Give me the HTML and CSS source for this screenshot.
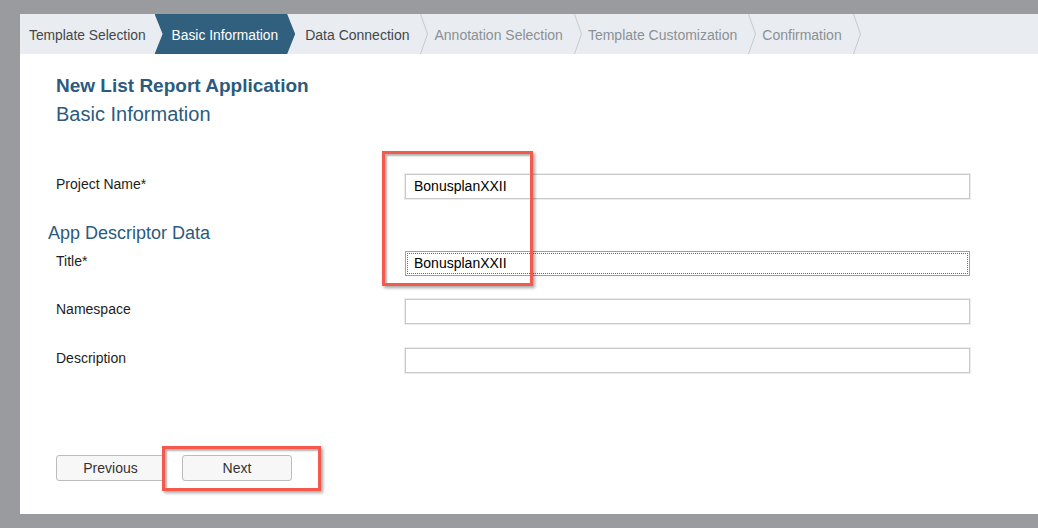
FILE: index.html
```html
<!DOCTYPE html>
<html lang="en">
<head>
<meta charset="utf-8">
<title>New List Report Application</title>
<link rel="stylesheet" href="styles.css">
</head>
<body>
<div class="panel">
  <nav class="steps">
    <span class="step done first">Template Selection</span>
    <span class="step active">Basic Information</span>
    <span class="step done">Data Connection</span>
    <svg class="sep" width="8" height="40" viewBox="0 0 8 40"><polyline points="0.5,0 7.5,20 0.5,40" fill="none" stroke="#c6cacf" stroke-width="1"/></svg>
    <span class="step todo">Annotation Selection</span>
    <svg class="sep" width="8" height="40" viewBox="0 0 8 40"><polyline points="0.5,0 7.5,20 0.5,40" fill="none" stroke="#c6cacf" stroke-width="1"/></svg>
    <span class="step todo">Template Customization</span>
    <svg class="sep" width="8" height="40" viewBox="0 0 8 40"><polyline points="0.5,0 7.5,20 0.5,40" fill="none" stroke="#c6cacf" stroke-width="1"/></svg>
    <span class="step todo">Confirmation</span>
    <svg class="sep" width="8" height="40" viewBox="0 0 8 40"><polyline points="0.5,0 7.5,20 0.5,40" fill="none" stroke="#c6cacf" stroke-width="1"/></svg>
  </nav>

  <div class="content">
    <h1 class="title">New List Report Application</h1>
    <h2 class="subtitle">Basic Information</h2>

    <div class="row row-first">
      <label class="label">Project Name*</label>
      <div class="input">BonusplanXXII</div>
    </div>

    <h3 class="section">App Descriptor Data</h3>

    <div class="row row-title">
      <label class="label">Title*</label>
      <div class="input focused">BonusplanXXII</div>
    </div>
    <div class="row row-ns">
      <label class="label">Namespace</label>
      <div class="input"></div>
    </div>
    <div class="row row-desc">
      <label class="label">Description</label>
      <div class="input"></div>
    </div>

    <div class="buttons">
      <button class="btn">Previous</button>
      <button class="btn btn-next">Next</button>
    </div>
  </div>

  <div class="highlight hl-inputs"></div>
  <div class="highlight hl-next"></div>
</div>
</body>
</html>
```

FILE: styles.css
```css
html, body {
  margin: 0;
  padding: 0;
}
body {
  background: #9a9b9f;
  width: 1038px;
  height: 528px;
  overflow: hidden;
  font-family: "Liberation Sans", Arial, sans-serif;
}
.panel {
  position: relative;
  margin: 14px 0 0 20px;
  width: 1018px;
  height: 500px;
  background: #ffffff;
}

/* breadcrumb */
.steps {
  display: flex;
  align-items: center;
  height: 40px;
  background: #e9edf1;
  font-size: 14px;
  white-space: nowrap;
}
.step {
  box-sizing: border-box;
  display: flex;
  align-items: center;
  height: 40px;
  padding-top: 2px;
}
.step.first {
  font-size: 13.8px;
  padding: 2px 9px 0 9px;
}
.step.done {
  color: #43474a;
}
.step.done:not(.first) {
  padding: 2px 11px 0 10px;
}
.step.active {
  color: #ffffff;
  background: #31607f;
  font-size: 13.8px;
  padding: 2px 17px 0 17px;
  clip-path: polygon(0 0, calc(100% - 8px) 0, 100% 50%, calc(100% - 8px) 100%, 0 100%, 8px 50%);
}
.step.todo {
  color: #8b9095;
  padding: 2px 11px 0 6px;
}
.sep {
  display: block;
  flex: none;
}

/* content */
.content {
  padding: 0 36px;
}
.title {
  margin: 20px 0 0;
  font-size: 19px;
  line-height: 24px;
  font-weight: bold;
  color: #2b5b7e;
}
.subtitle {
  margin: 3px 0 0;
  font-size: 20px;
  line-height: 26px;
  font-weight: normal;
  color: #2b5b7e;
}
.section {
  margin: 22px 0 0 -8px;
  font-size: 18px;
  line-height: 24px;
  font-weight: normal;
  color: #2b5b7e;
}
.row {
  display: flex;
  align-items: flex-start;
}
.row-first { margin-top: 47px; }
.row-title { margin-top: 6px; }
.row-ns { margin-top: 23px; }
.row-desc { margin-top: 24px; }
.label {
  width: 349px;
  flex: none;
  font-size: 14px;
  line-height: 20px;
  color: #1d1d1d;
}
.input {
  box-sizing: border-box;
  width: 565px;
  height: 25px;
  border: 1px solid #c9c9c9;
  box-shadow: 0 0 0 1px #ececec;
  padding: 0 8px;
  font-size: 14px;
  line-height: 23px;
  color: #000;
  background: #fff;
}
.input.focused {
  border-color: #8aa4bb;
  box-shadow: none;
  outline: 1px dotted #6b6b6b;
  outline-offset: -3px;
}

.buttons {
  display: flex;
  gap: 17px;
  margin-top: 82px;
}
.btn {
  box-sizing: border-box;
  width: 109px;
  height: 26px;
  background: #f7f7f7;
  border: 1px solid #bcbcbc;
  border-radius: 3px;
  font-family: "Liberation Sans", Arial, sans-serif;
  font-size: 14px;
  color: #333;
  padding: 0;
}
.btn-next {
  width: 110px;
}

/* annotation highlights */
.highlight {
  position: absolute;
  box-sizing: border-box;
  border: 3px solid #f35a4b;
  box-shadow: 2px 2px 3px rgba(0,0,0,0.35), inset 2px 2px 2px rgba(0,0,0,0.3);
}
.hl-inputs {
  left: 362px;
  top: 137px;
  width: 151px;
  height: 135px;
}
.hl-next {
  left: 142px;
  top: 432px;
  width: 159px;
  height: 45px;
}
```
